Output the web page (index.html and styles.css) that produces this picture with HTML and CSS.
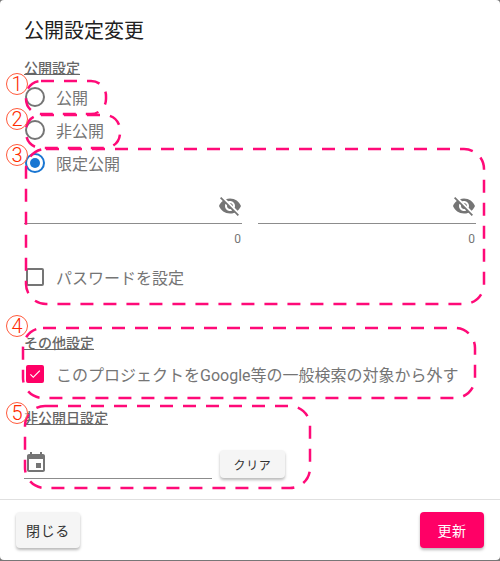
FILE: index.html
```html
<!DOCTYPE html>
<html lang="ja">
<head>
    <meta charset="UTF-8">
    <meta name="viewport" content="width=device-width, initial-scale=1.0">
    <title>公開設定変更</title>
    <link rel="stylesheet" href="styles.css">
</head>
<body>
    <div class="dialog">
        <h2 class="dialog-title">公開設定変更</h2>
        <div class="dialog-content">
            <p class="section-label first">公開設定</p>
            <label class="option"><span class="radio"></span>公開</label>
            <label class="option"><span class="radio"></span>非公開</label>
            <label class="option"><span class="radio checked"></span>限定公開</label>

            <div class="field-row">
                <div class="field">
                    <div class="field-input">
                        <svg class="icon" viewBox="0 0 24 24"><path d="M12 7c2.76 0 5 2.24 5 5 0 .65-.13 1.26-.36 1.83l2.92 2.92c1.51-1.26 2.7-2.89 3.43-4.75-1.73-4.39-6-7.5-11-7.5-1.4 0-2.74.25-3.98.7l2.16 2.16C10.74 7.13 11.35 7 12 7zM2 4.27l2.28 2.28.46.46C3.08 8.3 1.78 10.02 1 12c1.73 4.39 6 7.5 11 7.5 1.55 0 3.03-.3 4.38-.84l.42.42L19.73 22 21 20.73 3.27 3 2 4.27zM7.53 9.8l1.55 1.55c-.05.21-.08.43-.08.65 0 1.66 1.34 3 3 3 .22 0 .44-.03.65-.08l1.55 1.55c-.67.33-1.41.53-2.2.53-2.76 0-5-2.24-5-5 0-.79.2-1.53.53-2.2zm4.31-.78l3.15 3.15.02-.16c0-1.66-1.34-3-3-3l-.17.01z"/></svg>
                    </div>
                    <div class="counter">0</div>
                </div>
                <div class="field">
                    <div class="field-input">
                        <svg class="icon" viewBox="0 0 24 24"><path d="M12 7c2.76 0 5 2.24 5 5 0 .65-.13 1.26-.36 1.83l2.92 2.92c1.51-1.26 2.7-2.89 3.43-4.75-1.73-4.39-6-7.5-11-7.5-1.4 0-2.74.25-3.98.7l2.16 2.16C10.74 7.13 11.35 7 12 7zM2 4.27l2.28 2.28.46.46C3.08 8.3 1.78 10.02 1 12c1.73 4.39 6 7.5 11 7.5 1.55 0 3.03-.3 4.38-.84l.42.42L19.73 22 21 20.73 3.27 3 2 4.27zM7.53 9.8l1.55 1.55c-.05.21-.08.43-.08.65 0 1.66 1.34 3 3 3 .22 0 .44-.03.65-.08l1.55 1.55c-.67.33-1.41.53-2.2.53-2.76 0-5-2.24-5-5 0-.79.2-1.53.53-2.2zm4.31-.78l3.15 3.15.02-.16c0-1.66-1.34-3-3-3l-.17.01z"/></svg>
                    </div>
                    <div class="counter">0</div>
                </div>
            </div>

            <label class="option password-option"><span class="checkbox"></span>パスワードを設定</label>

            <p class="section-label other">その他設定</p>
            <label class="option search-option">
                <span class="checkbox checked">
                    <svg viewBox="0 0 24 24"><path d="M9 16.17 4.83 12l-1.42 1.41L9 19 21 7l-1.41-1.41z"/></svg>
                </span>
                このプロジェクトをGoogle等の一般検索の対象から外す
            </label>

            <p class="section-label closing">非公開日設定</p>
            <div class="date-row">
                <div class="date-input">
                    <svg class="icon" viewBox="0 0 24 24"><path d="M17 12h-5v5h5v-5zM16 1v2H8V1H6v2H5c-1.11 0-1.99.9-1.99 2L3 19c0 1.1.89 2 2 2h14c1.1 0 2-.9 2-2V5c0-1.1-.9-2-2-2h-1V1h-2zm3 18H5V8h14v11z"/></svg>
                </div>
                <button class="btn btn-small">クリア</button>
            </div>
        </div>
        <div class="dialog-actions">
            <button class="btn">閉じる</button>
            <button class="btn btn-primary">更新</button>
        </div>

        <!-- annotations drawn on top of the screenshot -->
        <svg class="marks" viewBox="0 0 500 561">
            <rect x="26" y="81" width="80" height="33" rx="15"/>
            <rect x="26" y="115" width="94" height="33" rx="15"/>
            <rect x="26" y="149" width="458" height="155" rx="20"/>
            <rect x="23" y="328" width="452" height="70" rx="20"/>
            <rect x="25" y="406" width="285" height="82" rx="20"/>
        </svg>
        <span class="num num-1">1</span>
        <span class="num num-2">2</span>
        <span class="num num-3">3</span>
        <span class="num num-4">4</span>
        <span class="num num-5">5</span>
    </div>
</body>
</html>
```

FILE: styles.css
```css
* {
    box-sizing: border-box;
}
body {
    margin: 0;
    height: 561px;
    overflow: hidden;
    background-color: #777;
    font-family: Roboto, "Noto Sans CJK JP", sans-serif;
}
.dialog {
    position: relative;
    width: 500px;
    height: 560px;
    background-color: white;
    border-radius: 4px;
    display: flex;
    flex-direction: column;
}
.dialog-title {
    margin: 0;
    padding: 16px 24px 0;
    height: 52px;
    font-size: 20px;
    line-height: 30px;
    font-weight: 400;
    color: #212121;
}
.dialog-content {
    flex: 1;
    padding: 0 24px;
}
.section-label {
    margin: 0;
    font-size: 14px;
    line-height: 20px;
    font-weight: 500;
    color: #666;
    text-decoration: underline;
}
.section-label.first {
    margin-top: 6px;
    margin-bottom: 2px;
}
.section-label.other {
    margin-top: 40px;
}
.section-label.closing {
    margin-top: 18px;
}
.option {
    display: flex;
    align-items: center;
    height: 33px;
    font-size: 16px;
    color: #757575;
}
.radio, .checkbox {
    flex: none;
    width: 20px;
    height: 20px;
    margin: 0 11px 0 1px;
    border: 2px solid #757575;
    background-color: white;
}
.radio {
    border-radius: 50%;
}
.radio.checked {
    border-color: #1976d2;
    padding: 3px;
    background-color: #1976d2;
    background-clip: content-box;
}
.checkbox {
    width: 18px;
    height: 18px;
    margin: 0 12px 0 2px;
    border-radius: 2px;
}
.checkbox.checked {
    border-color: #ff0066;
    background-color: #ff0066;
}
.checkbox svg {
    display: block;
    width: 14px;
    height: 14px;
    fill: white;
}
.field-row {
    display: flex;
    gap: 16px;
    margin-top: 8px;
}
.field {
    width: 218px;
}
.field-input {
    display: flex;
    justify-content: flex-end;
    align-items: center;
    height: 37px;
    padding-top: 2px;
    border-bottom: 1px solid #8c8c8c;
}
.icon {
    width: 24px;
    height: 24px;
    fill: #757575;
}
.counter {
    margin-top: 8px;
    padding-right: 1px;
    font-size: 12px;
    line-height: 14px;
    text-align: right;
    color: #757575;
}
.password-option {
    margin-top: 14px;
}
.search-option {
    margin-top: 4px;
}
.date-row {
    display: flex;
    align-items: flex-end;
    gap: 8px;
    margin-top: 14px;
}
.date-input {
    width: 188px;
    height: 37px;
    padding-bottom: 3px;
    border-bottom: 1px solid #8c8c8c;
    display: flex;
    align-items: flex-end;
}
.btn {
    width: 64px;
    height: 36px;
    padding: 0;
    border: none;
    border-radius: 4px;
    background-color: #f5f5f5;
    color: #333;
    font-family: inherit;
    font-size: 14px;
    letter-spacing: 0.6px;
    box-shadow: 0 2px 3px rgba(0, 0, 0, 0.28);
}
.btn-small {
    width: 65px;
    height: 28px;
    margin-bottom: 1px;
    font-size: 12px;
}
.btn-primary {
    background-color: #ff0066;
    color: white;
}
.dialog-actions {
    display: flex;
    justify-content: space-between;
    height: 61px;
    padding: 12px 16px 0;
    border-top: 1px solid #e0e0e0;
}
.marks {
    position: absolute;
    top: 0;
    left: 0;
    width: 500px;
    height: 561px;
    fill: none;
    stroke: #ff0a78;
    stroke-width: 2.5px;
    stroke-dasharray: 13 10;
    pointer-events: none;
}
.num {
    position: absolute;
    left: 6px;
    width: 22px;
    height: 22px;
    border: 1px solid #ff5a3c;
    border-radius: 50%;
    font-size: 20px;
    font-weight: 300;
    line-height: 20px;
    text-align: center;
    color: #ff2a00;
    background-color: rgba(255, 255, 255, 0.5);
}
.num-1 { top: 73px; }
.num-2 { top: 108px; }
.num-3 { top: 144px; }
.num-4 { top: 315px; }
.num-5 { top: 402px; }
```
